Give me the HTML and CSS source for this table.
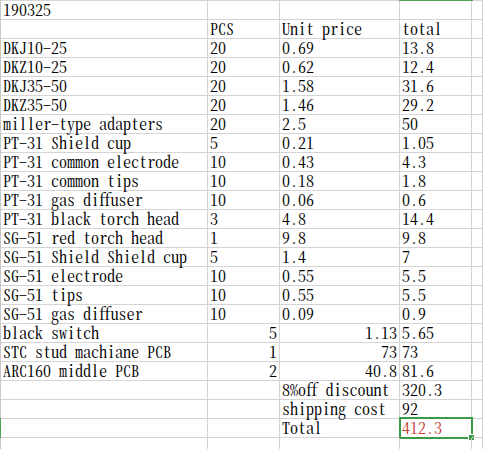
FILE: index.html
```html
<!DOCTYPE html>
<html>
<head>
<meta charset="utf-8">
<link rel="stylesheet" href="styles.css">
</head>
<body>
<div class="sheet">
  <div class="row"><div class="c">190325</div><div class="c"></div><div class="c"></div><div class="c"></div><div class="c"></div></div>
  <div class="row"><div class="c"></div><div class="c">PCS</div><div class="c">Unit price</div><div class="c">total</div><div class="c"></div></div>
  <div class="row"><div class="c">DKJ10-25</div><div class="c">20</div><div class="c">0.69</div><div class="c">13.8</div><div class="c"></div></div>
  <div class="row"><div class="c">DKZ10-25</div><div class="c">20</div><div class="c">0.62</div><div class="c">12.4</div><div class="c"></div></div>
  <div class="row"><div class="c">DKJ35-50</div><div class="c">20</div><div class="c">1.58</div><div class="c">31.6</div><div class="c"></div></div>
  <div class="row"><div class="c">DKZ35-50</div><div class="c">20</div><div class="c">1.46</div><div class="c">29.2</div><div class="c"></div></div>
  <div class="row"><div class="c">miller-type adapters</div><div class="c">20</div><div class="c">2.5</div><div class="c">50</div><div class="c"></div></div>
  <div class="row"><div class="c">PT-31 Shield cup</div><div class="c">5</div><div class="c">0.21</div><div class="c">1.05</div><div class="c"></div></div>
  <div class="row"><div class="c">PT-31 common electrode</div><div class="c">10</div><div class="c">0.43</div><div class="c">4.3</div><div class="c"></div></div>
  <div class="row"><div class="c">PT-31 common tips</div><div class="c">10</div><div class="c">0.18</div><div class="c">1.8</div><div class="c"></div></div>
  <div class="row"><div class="c">PT-31 gas diffuser</div><div class="c">10</div><div class="c">0.06</div><div class="c">0.6</div><div class="c"></div></div>
  <div class="row"><div class="c">PT-31 black torch head</div><div class="c">3</div><div class="c">4.8</div><div class="c">14.4</div><div class="c"></div></div>
  <div class="row"><div class="c">SG-51 red torch head</div><div class="c">1</div><div class="c">9.8</div><div class="c">9.8</div><div class="c"></div></div>
  <div class="row"><div class="c">SG-51 Shield Shield cup</div><div class="c">5</div><div class="c">1.4</div><div class="c">7</div><div class="c"></div></div>
  <div class="row"><div class="c">SG-51 electrode</div><div class="c">10</div><div class="c">0.55</div><div class="c">5.5</div><div class="c"></div></div>
  <div class="row"><div class="c">SG-51 tips</div><div class="c">10</div><div class="c">0.55</div><div class="c">5.5</div><div class="c"></div></div>
  <div class="row"><div class="c">SG-51 gas diffuser</div><div class="c">10</div><div class="c">0.09</div><div class="c">0.9</div><div class="c"></div></div>
  <div class="row"><div class="c">black switch</div><div class="c num">5</div><div class="c num">1.13</div><div class="c">5.65</div><div class="c"></div></div>
  <div class="row"><div class="c">STC stud machiane PCB</div><div class="c num">1</div><div class="c num">73</div><div class="c">73</div><div class="c"></div></div>
  <div class="row"><div class="c">ARC160 middle PCB</div><div class="c num">2</div><div class="c num">40.8</div><div class="c">81.6</div><div class="c"></div></div>
  <div class="row"><div class="c"></div><div class="c"></div><div class="c">8%off discount</div><div class="c">320.3</div><div class="c"></div></div>
  <div class="row"><div class="c"></div><div class="c"></div><div class="c">shipping cost</div><div class="c">92</div><div class="c"></div></div>
  <div class="row selrow"><div class="c"></div><div class="c"></div><div class="c">Total</div><div class="c sel red">412.3<span class="selbox"><span class="handle"></span></span></div><div class="c"></div></div>
  <div class="row"><div class="c"></div><div class="c"></div><div class="c"></div><div class="c"></div><div class="c"></div></div>
</div>
</body>
</html>
```

FILE: styles.css
```css
html, body {
  margin: 0;
  padding: 0;
  background: #ffffff;
  overflow: hidden;
}

.sheet {
  position: relative;
  width: 483px;
  border-top: 1px solid #d6d6d6;
  border-left: 1px solid #c8c8c8;
  box-sizing: border-box;
  font-family: "Noto Serif CJK SC", "Noto Serif CJK JP", serif;
  font-feature-settings: "hwid" 1;
  font-size: 16px;
  color: #000000;
}

.sheet::before {
  content: "";
  position: absolute;
  top: -1px;
  left: 398px;
  width: 74px;
  height: 1px;
  background: #4fa04f;
}

.row {
  display: grid;
  grid-template-columns: 207px 72px 120px 72px 1fr;
  height: 19px;
}

.c {
  position: relative;
  box-sizing: border-box;
  height: 19px;
  border-right: 1px solid #d4d4d4;
  border-bottom: 1px solid #d4d4d4;
  padding: 0 0 0 2px;
  line-height: 18px;
  white-space: nowrap;
  overflow: visible;
}

.num {
  text-align: right;
  padding: 0 2px 0 0;
}

.red {
  color: #c8403c;
}

.selrow::before {
  content: "";
  position: absolute;
  left: -1px;
  width: 1px;
  height: 20px;
  margin-top: -1px;
  background: #4fa04f;
}

.selbox {
  position: absolute;
  top: -2px;
  left: -1px;
  right: -2px;
  bottom: -2px;
  border: 2px solid #3f9a47;
}

.handle {
  position: absolute;
  right: -4px;
  bottom: -4px;
  width: 5px;
  height: 5px;
  background: #3f9a47;
  border: 1px solid #ffffff;
}
```
